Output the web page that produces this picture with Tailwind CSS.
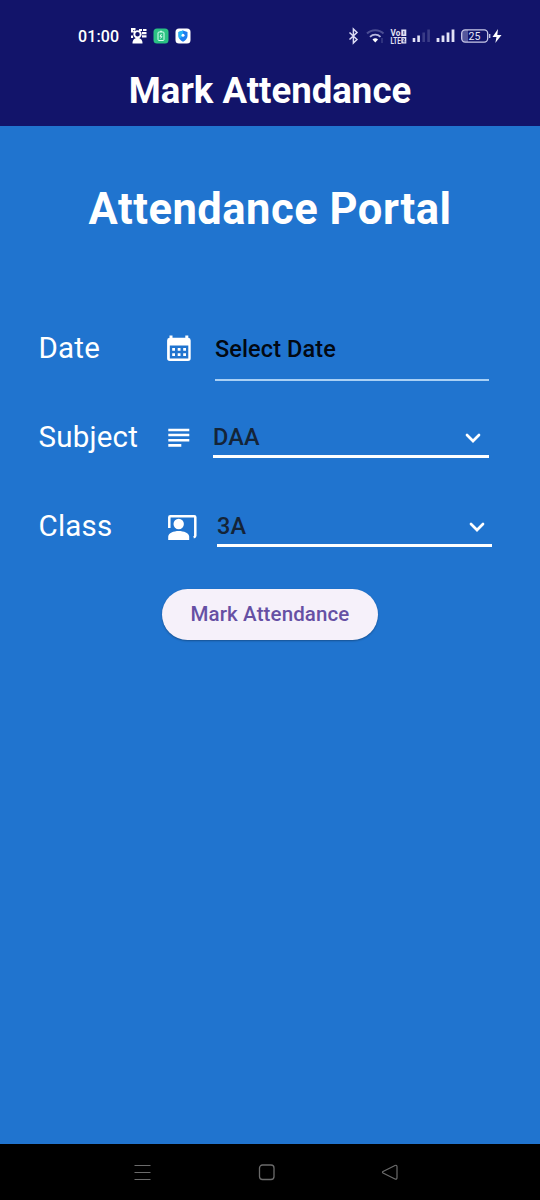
<!DOCTYPE html>
<html lang="en">
<head>
<meta charset="utf-8">
<title>Mark Attendance</title>
<script src="https://cdn.jsdelivr.net/npm/@tailwindcss/browser@4"></script>
</head>
<body class="font-['Roboto',sans-serif]">
<div class="flex h-[1200px] w-[540px] flex-col overflow-hidden bg-[#2074cf] text-white">
  <header class="h-[126px] shrink-0 bg-[#12146a]">
    <div class="flex h-[72px] items-center pl-[78px]">
      <span class="w-[53px] pt-[1px] text-[16px] font-medium leading-none tracking-[0.1px] whitespace-nowrap">01:00</span>
      <svg class="h-4 w-4" viewBox="0 0 16 16" fill="none">
        <path d="M1 4.500V1h3.500M1 7.500v2.500M2.500 3l2 1.500M8 2h3M12 2h3.500M11 5.200h4.500M11 8.400h4.500" stroke="#fff" stroke-width="2.200"/>
        <circle cx="6.500" cy="6.300" r="3.200" stroke="#fff" stroke-width="1.900"/>
        <path d="M1.500 15.500c0-4 2-5.500 5-5.500s5 1.500 5 5.500z" fill="#fff"/>
      </svg>
      <svg class="ml-[6px] h-4 w-4" viewBox="0 0 16 16" fill="none">
        <rect x=".5" y=".5" width="15" height="15" rx="3.500" fill="#2bc283"/>
        <rect x="5" y="4" width="6" height="8.500" rx="1" stroke="#d8fff0"/>
        <path d="M7 3.300h2M8.500 6L7 8.300h2L7.500 10.500" stroke="#d8fff0"/>
      </svg>
      <svg class="ml-[6px] h-4 w-4" viewBox="0 0 16 16">
        <rect x=".5" y=".5" width="15" height="15" rx="3.500" fill="#fff"/>
        <path d="M8 2.500l4.500 1.500v4c0 2.600-2 4.500-4.500 5.700C5.500 12.500 3.500 10.600 3.500 8V4z" fill="#1c7df0"/>
        <path d="M8 2.500L3.500 4v4c0 1 .3 2 1 2.800L8 8z" fill="#23b3f5"/>
        <circle cx="8" cy="7.300" r="1.500" fill="#fff"/>
      </svg>
      <svg class="ml-[155px] h-[20px] w-[160px]" viewBox="346 26 160 20" fill="none">
        <path d="M349.500 32.500l7.500 7-3.600 3.500v-14l3.600 3.500-7.500 7" stroke="#dcdcf5" stroke-width="1.500"/>
        <path d="M367 33.500c4.500-4.500 12-4.500 16.500 0" stroke="#4b4d93" stroke-width="2"/>
        <path d="M370 36.800c3-2.900 7.500-2.900 10.500 0" stroke="#b9b9df" stroke-width="1.800"/>
        <path d="M372.500 39.500c1.700-1.600 4-1.600 5.500 0L375.300 42.500z" fill="#fff"/>
        <path d="M382 38v5" stroke="#3a3c86" stroke-width="1.500"/>
        <text x="390.500" y="36" font-size="9" font-weight="700" fill="#e2e2f6" textLength="9.800" lengthAdjust="spacingAndGlyphs">Vo</text>
        <text x="390.500" y="43.600" font-size="9" font-weight="700" fill="#e2e2f6" textLength="10.500" lengthAdjust="spacingAndGlyphs">LTE</text>
        <rect x="401.300" y="29.500" width="5" height="6.500" fill="#e2e2f6"/>
        <rect x="401.300" y="37" width="5" height="6.500" fill="#e2e2f6"/>
        <path d="M403.800 31v3.500M402.500 38.800h2v1.500h-1.200v1.500h2" stroke="#12146a" stroke-width=".8"/>
        <path d="M414 38v4M418.600 35.500v6.500" stroke="#e2e2f6" stroke-width="2.600"/>
        <path d="M423.700 32.500v9.500M428.600 29.500v12.500" stroke="#3a3c86" stroke-width="2.600"/>
        <path d="M438 38v4M443 35.500v6.500M448 32.500v9.500M453 29.500v12.500" stroke="#e2e2f6" stroke-width="2.800"/>
        <path d="M465 30h3v12h-3a3 3 0 0 1-3-3v-6a3 3 0 0 1 3-3z" fill="#55579b"/>
        <rect x="461.700" y="29.900" width="26" height="12.200" rx="3.500" stroke="#c9c9e8" stroke-width="1.300"/>
        <path d="M489.700 34v4" stroke="#c9c9e8" stroke-width="1.300"/>
        <text x="468.500" y="39.800" font-size="10.500" fill="#e6e6f8" textLength="12">25</text>
        <path d="M498 29l-5.500 8h4l-1.200 6 6.200-8h-4.200z" fill="#fff"/>
      </svg>
    </div>
    <h1 class="pt-[1px] text-center text-[36.600px] font-bold leading-[36px] whitespace-nowrap">Mark Attendance</h1>
  </header>

  <main class="flex grow flex-col">
    <h2 class="mt-[59px] text-center text-[43.500px] font-bold leading-[50px] tracking-[0.520px] whitespace-nowrap">Attendance Portal</h2>

    <section class="mt-[76px] flex flex-col pl-[38px] leading-none">
      <div class="flex h-[89px]">
        <span class="w-[126px] pt-[17px] pl-[0.500px] text-[29.500px] leading-[40px] tracking-[0.200px]">Date</span>
        <svg class="mt-[20px] h-[34px] w-[34px]" viewBox="164 331 34 34">
          <path fill-rule="evenodd" fill="#fff" d="M169.500 335.500h3v2.200h12.800v-2.200h3v2.200a2.700 2.700 0 0 1 2.400 2.700v17.900a2.700 2.700 0 0 1-2.700 2.700h-18.200a2.700 2.700 0 0 1-2.700-2.700v-17.900a2.700 2.700 0 0 1 2.400-2.700zM169.800 345.600v12.800h18.500v-12.800z"/>
          <path d="M172.200 349.300h13.800M172.200 354.700h13.800" stroke="#fff" stroke-width="2.800" stroke-dasharray="2.800 2.700"/>
        </svg>
        <div class="ml-[17px] h-[70px] w-[274px] border-b-2 border-[#a9d0f5] pt-[18px] text-[23.500px] font-medium leading-[40px] tracking-[0.100px] text-[#020812]">Select Date</div>
      </div>
      <div class="flex h-[89px]">
        <span class="w-[126px] pt-[17px] pl-[0.500px] text-[29.500px] leading-[40px] tracking-[0.200px]">Subject</span>
        <svg class="mt-[20px] h-[34px] w-[34px]" viewBox="164 420 34 34">
          <path d="M168.300 430h21M168.300 435h21M168.300 440.200h21M168.300 445.400h13" stroke="#fff" stroke-width="2.600"/>
        </svg>
        <div class="ml-[15px] flex h-[58px] w-[276px] justify-between border-b-[3px] border-white pt-[17px] pr-[7px] text-[23.500px] leading-[40px] text-[#142438]">
          <span class="font-medium tracking-[0.100px]">DAA</span>
          <svg class="mt-[13px] h-4 w-[18px]" viewBox="0 0 18 16" fill="none"><path d="M3 5l6 6 6-6" stroke="#fff" stroke-width="2.700" stroke-linecap="round"/></svg>
        </div>
      </div>
      <div class="flex h-[89px]">
        <span class="w-[126px] pt-[17px] pl-[0.500px] text-[29.500px] leading-[40px] tracking-[0.200px]">Class</span>
        <svg class="mt-[20px] h-[34px] w-[34px]" viewBox="164 509 34 34">
          <path d="M169.300 528v-10.700a1 1 0 0 1 1-1h24a1 1 0 0 1 1 1v18.500q0 1-1.700 1.400" stroke="#fff" stroke-width="2.500" fill="none"/>
          <circle cx="178.700" cy="524" r="5.200" fill="#fff"/>
          <path d="M168.200 540v-3.200c0-3.700 5.500-5.800 10.500-5.800s10.500 2.100 10.500 5.800v3.200z" fill="#fff"/>
        </svg>
        <div class="ml-[19px] flex h-[58px] w-[275px] justify-between border-b-[3px] border-white pt-[17px] pr-[6px] text-[23.500px] leading-[40px] text-[#142438]">
          <span class="font-medium tracking-[0.100px]">3A</span>
          <svg class="mt-[13px] h-4 w-[18px]" viewBox="0 0 18 16" fill="none"><path d="M3 5l6 6 6-6" stroke="#fff" stroke-width="2.700" stroke-linecap="round"/></svg>
        </div>
      </div>
    </section>

    <button class="mt-[11px] h-[51px] w-[216px] self-center rounded-full bg-[#f6f1fa] text-[20.500px] font-medium tracking-[0.120px] whitespace-nowrap text-[#6650a4] shadow-[0_1px_2px_rgba(0,0,0,0.3)]">Mark Attendance</button>
  </main>

  <nav class="flex h-[56px] shrink-0 bg-black pt-[17px] pl-[131px]">
    <svg class="h-[22px] w-[22px]" viewBox="0 0 22 22"><path d="M3.500 4.500h16M3.500 11.500h16M3.500 18.500h16" stroke="#6b6b6b" stroke-width="1.200"/></svg>
    <svg class="ml-[103px] h-[22px] w-[22px]" viewBox="0 0 22 22" fill="none"><rect x="3.500" y="4" width="14.500" height="14.500" rx="3" stroke="#6b6b6b" stroke-width="1.300"/></svg>
    <svg class="ml-[102px] h-[22px] w-[22px]" viewBox="0 0 22 22" fill="none"><path d="M3 10.500L15 4.500Q17 3.700 17 5.700v10.800Q17 18.700 15 18L3 12Q2 11.300 3 10.500z" stroke="#6b6b6b" stroke-width="1.200"/></svg>
  </nav>
</div>
</body>
</html>
